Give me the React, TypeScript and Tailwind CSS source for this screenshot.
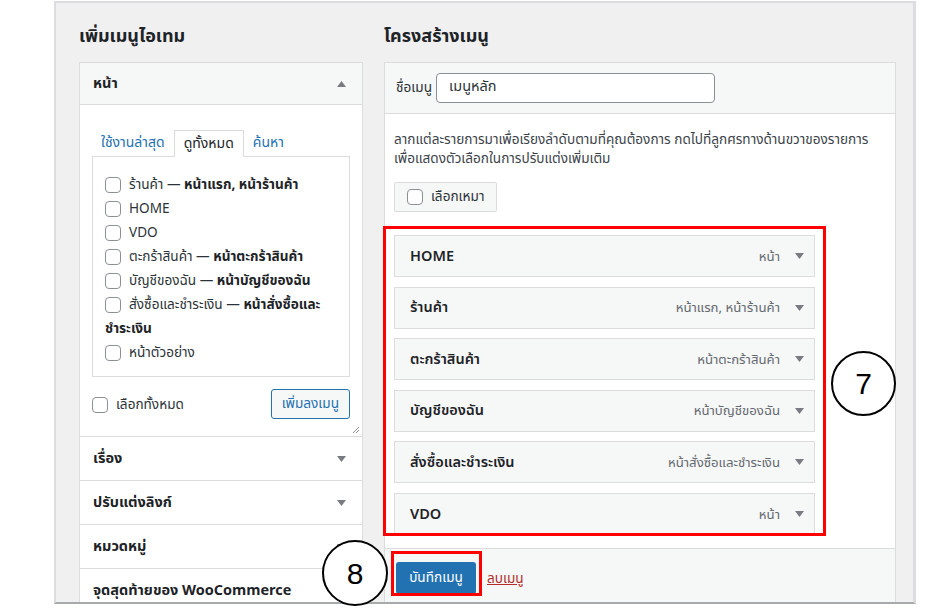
import React from "react";

const FONT =
  "font-['Noto_Sans_Thai','Leelawadee_UI',Tahoma,'Noto_Sans','DejaVu_Sans',sans-serif]";

function Tri({ up = false }: { up?: boolean }) {
  return (
    <svg width="9" height="6" viewBox="0 0 9 6" className="block">
      {up ? (
        <polygon points="0,6 9,6 4.5,0" fill="#787c82" />
      ) : (
        <polygon points="0,0 9,0 4.5,6" fill="#787c82" />
      )}
    </svg>
  );
}

function Check() {
  return (
    <span className="inline-block w-4 h-4 shrink-0 border border-[#8c8f94] rounded-[4px] bg-white" />
  );
}

type PageItem = { a: string; b?: string; b2?: string };

const pages: PageItem[] = [
  { a: "ร้านค้า", b: "หน้าแรก, หน้าร้านค้า" },
  { a: "HOME" },
  { a: "VDO" },
  { a: "ตะกร้าสินค้า", b: "หน้าตะกร้าสินค้า" },
  { a: "บัญชีของฉัน", b: "หน้าบัญชีของฉัน" },
  { a: "สั่งซื้อและชำระเงิน", b: "หน้าสั่งซื้อและ", b2: "ชำระเงิน" },
  { a: "หน้าตัวอย่าง" },
];

const menu: [string, string][] = [
  ["HOME", "หน้า"],
  ["ร้านค้า", "หน้าแรก, หน้าร้านค้า"],
  ["ตะกร้าสินค้า", "หน้าตะกร้าสินค้า"],
  ["บัญชีของฉัน", "หน้าบัญชีของฉัน"],
  ["สั่งซื้อและชำระเงิน", "หน้าสั่งซื้อและชำระเงิน"],
  ["VDO", "หน้า"],
];

const sections = ["เรื่อง", "ปรับแต่งลิงก์", "หมวดหมู่", "จุดสุดท้ายของ WooCommerce"];

export default function App() {
  return (
    <div
      className={`relative w-[937px] h-[610px] bg-white overflow-hidden text-[#2c3338] ${FONT}`}
    >
      <div className="ml-[54px] mt-[1px] w-[862px] h-[603px] bg-[#f0f0f1] border-t-2 border-l-2 border-r-[3px] border-b-2 border-[#dcdcde] border-b-[#a7aaad] overflow-hidden flex pl-[23px]">
        {/* Left column */}
        <div className="w-[284px] shrink-0 pt-[21px]">
          <h2 className="h-[26px] leading-[26px] text-[18px] font-bold text-[#1d2327] mb-[12px]">
            เพิ่มเมนูไอเทม
          </h2>
          <div className="border border-[#dcdcde] bg-white">
            <div className="h-[42px] border-b border-[#dcdcde] bg-[#f6f7f7] flex items-center justify-between pl-[13px] pr-[16px]">
              <span className="text-[14.5px] font-bold text-[#1d2327] pt-[2px]">หน้า</span>
              <Tri up />
            </div>
            <div className="relative pt-[25px] px-[12px] pb-[17px]">
              <div className="flex items-end h-[26px] text-[14px]">
                <span className="px-[9px] leading-[26px] text-[#2271b1]">ใช้งานล่าสุด</span>
                <span className="px-[9px] leading-[25px] h-[27px] -mb-px border border-b-0 border-[#dcdcde] bg-white text-[#1d2327] relative z-10">
                  ดูทั้งหมด
                </span>
                <span className="px-[9px] leading-[26px] text-[#2271b1]">ค้นหา</span>
              </div>
              <div className="h-[221px] border border-[#dcdcde] bg-white pt-[16px] pl-[12px] text-[13.6px]">
                {pages.map((p, i) => (
                  <React.Fragment key={i}>
                    <div className="flex items-center gap-2 h-[24px]">
                      <Check />
                      <span className="whitespace-nowrap">
                        {p.a}
                        {p.b && (
                          <>
                            {" — "}
                            <b className="font-bold text-[#1d2327]">{p.b}</b>
                          </>
                        )}
                      </span>
                    </div>
                    {p.b2 && (
                      <div className="h-[24px] leading-[24px] font-bold text-[#1d2327]">
                        {p.b2}
                      </div>
                    )}
                  </React.Fragment>
                ))}
              </div>
              <div className="mt-[12px] h-[30px] flex items-center justify-between">
                <div className="flex items-center gap-2 text-[13.6px] pt-[2px]">
                  <Check />
                  <span>เลือกทั้งหมด</span>
                </div>
                <button className="h-[30px] px-[10px] border border-[#2271b1] rounded-[3px] bg-[#f6f7f7] text-[13.6px] text-[#2271b1]">
                  เพิ่มลงเมนู
                </button>
              </div>
              <svg
                width="8"
                height="8"
                viewBox="0 0 8 8"
                className="absolute right-[2px] bottom-[2px]"
              >
                <line x1="1" y1="7" x2="7" y2="1" stroke="#8c8f94" strokeWidth="1" />
                <line x1="4" y1="7" x2="7" y2="4" stroke="#8c8f94" strokeWidth="1" />
              </svg>
            </div>
            {sections.map((s, i) => (
              <div
                key={s}
                className="h-[44px] border-t border-[#dcdcde] flex items-center justify-between pl-[13px] pr-[16px]"
              >
                <span className="text-[14.5px] font-bold text-[#1d2327] pt-[3px]">{s}</span>
                {i < 3 && <Tri />}
              </div>
            ))}
          </div>
        </div>

        {/* Right column */}
        <div className="ml-[21px] w-[512px] shrink-0 pt-[21px]">
          <h2 className="h-[26px] leading-[26px] text-[18px] font-bold text-[#1d2327] mb-[12px]">
            โครงสร้างเมนู
          </h2>
          <div className="border border-[#dcdcde] bg-white">
            <div className="h-[51px] border-b border-[#dcdcde] bg-[#f6f7f7] flex items-center pl-[11px]">
              <span className="text-[13.6px] text-[#2c3338]">ชื่อเมนู</span>
              <div className="ml-[4px] w-[279px] h-[30px] border border-[#8c8f94] rounded-[4px] bg-white flex items-center pl-[12px] text-[14.5px] text-[#2c3338]">
                เมนูหลัก
              </div>
            </div>
            <div className="pt-[17px] px-[9px] pb-[13px]">
              <p className="text-[13.6px] leading-[19px] text-[#3c434a] whitespace-nowrap">
                ลากแต่ละรายการมาเพื่อเรียงลำดับตามที่คุณต้องการ กดไปที่ลูกศรทางด้านขวาของรายการ
                <br />
                เพื่อแสดงตัวเลือกในการปรับแต่งเพิ่มเติม
              </p>
              <div className="mt-[13px] inline-flex items-center gap-2 h-[30px] px-[12px] border border-[#dcdcde] rounded-[2px] bg-[#f6f7f7] text-[13.6px]">
                <Check />
                <span>เลือกเหมา</span>
              </div>
              <div className="mt-[23px] w-[421px] flex flex-col gap-[9.6px]">
                {menu.map(([t, d]) => (
                  <div
                    key={t}
                    className="h-[42px] border border-[#dcdcde] bg-[#f6f7f7] flex items-center pl-[15px] pr-[10px]"
                  >
                    <span className="text-[14.5px] font-semibold text-[#1d2327] pt-[3px]">{t}</span>
                    <span className="ml-auto text-[13.2px] text-[#646970] pt-[3px]">{d}</span>
                    <span className="ml-[15px]">
                      <Tri />
                    </span>
                  </div>
                ))}
              </div>
            </div>
            <div className="h-[60px] border-t border-[#dcdcde] bg-[#f6f7f7] pt-[13px] pl-[11px] flex items-start">
              <button className="h-[32px] w-[80px] rounded-[3px] bg-[#2271b1] text-white text-[13.6px]">
                บันทึกเมนู
              </button>
              <span className="ml-[11px] mt-[7px] text-[13.6px] text-[#b32d2e] underline">ลบเมนู</span>
            </div>
          </div>
        </div>
      </div>

      {/* Annotations */}
      <div className="absolute left-[383px] top-[226px] w-[443px] h-[310px] border-[3px] border-[#ff0000]" />
      <div className="absolute left-[391px] top-[551px] w-[91px] h-[45px] border-[3px] border-[#ff0000]" />
      <div className="absolute left-[831px] top-[351px] w-[65px] h-[65px] rounded-full border-2 border-black bg-white flex items-center justify-center text-[30px] text-black font-['Liberation_Sans',Arial,sans-serif]">
        7
      </div>
      <div className="absolute left-[322px] top-[540px] w-[66px] h-[66px] rounded-full border-2 border-black bg-white flex items-center justify-center text-[30px] text-black font-['Liberation_Sans',Arial,sans-serif]">
        8
      </div>
    </div>
  );
}
